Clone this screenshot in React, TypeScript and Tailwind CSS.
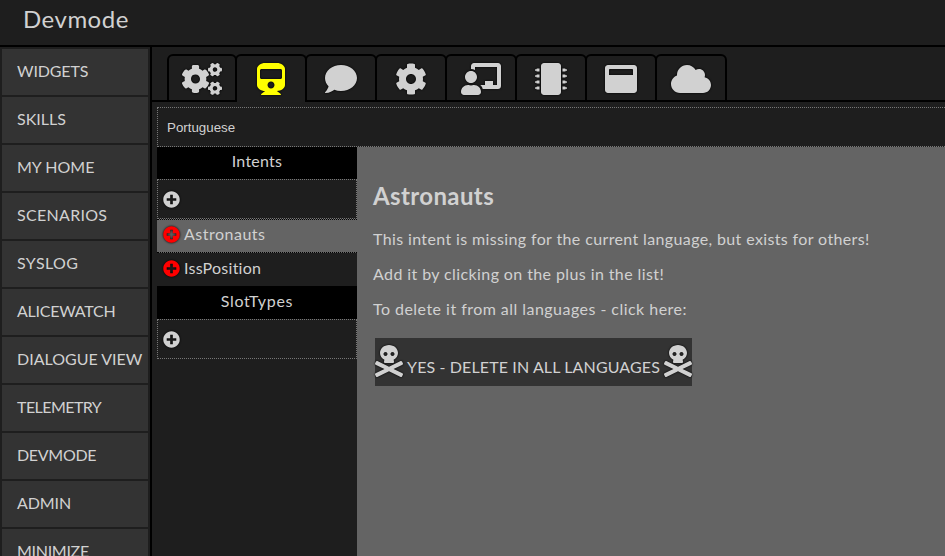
import React from "react";
import {
  FaCogs,
  FaTrain,
  FaComment,
  FaCog,
  FaChalkboardTeacher,
  FaMicrochip,
  FaWindowMaximize,
  FaCloud,
  FaPlusCircle,
  FaSkullCrossbones,
} from "react-icons/fa";

const menu = [
  { label: "WIDGETS", spacing: "tracking-[-0.15px]" },
  { label: "SKILLS", spacing: "tracking-[0px]" },
  { label: "MY HOME", spacing: "tracking-[0px]" },
  { label: "SCENARIOS", spacing: "tracking-[0.3px]" },
  { label: "SYSLOG", spacing: "tracking-[0.4px]" },
  { label: "ALICEWATCH", spacing: "tracking-[-0.25px]" },
  { label: "DIALOGUE VIEW", spacing: "tracking-[0px]" },
  { label: "TELEMETRY", spacing: "tracking-[-0.55px]" },
  { label: "DEVMODE", spacing: "tracking-[-0.3px]" },
  { label: "ADMIN", spacing: "tracking-[-0.1px]" },
  { label: "MINIMIZE", spacing: "tracking-[-0.3px]" },
];

const tabs = [
  { Icon: FaCogs, width: "w-10" },
  { Icon: FaTrain, width: "w-8" },
  { Icon: FaComment, width: "w-8" },
  { Icon: FaCog, width: "w-8" },
  { Icon: FaChalkboardTeacher, width: "w-10" },
  { Icon: FaMicrochip, width: "w-8" },
  { Icon: FaWindowMaximize, width: "w-8" },
  { Icon: FaCloud, width: "w-10" },
];

function AddRow() {
  return (
    <div className="flex h-10 items-center border border-dotted border-[#777] pl-[5px]">
      <FaPlusCircle className="size-[17px] drop-shadow-[0_0_1px_#000]" />
    </div>
  );
}

function Skull() {
  return <FaSkullCrossbones className="h-8 w-7 shrink-0 drop-shadow-[0_0_1px_#000]" />;
}

export default function App() {
  return (
    <div className="flex h-screen flex-col overflow-hidden bg-[#1e1e1e] font-[Lato,sans-serif] text-base text-[#d1d1d1]">
      <header className="h-[47px] shrink-0 border-b-2 border-black pl-[23px]">
        <h1 className="pt-px text-2xl leading-9 tracking-[0.5px]">Devmode</h1>
      </header>
      <div className="flex min-h-0 flex-1">
        <nav className="flex w-[152px] shrink-0 flex-col gap-[2px] overflow-hidden border-r-2 border-black pt-[2px] pr-[2px] pl-[2px]">
          {menu.map((m) => (
            <a key={m.label} className="h-[46px] shrink-0 bg-[#333] pl-[15px] leading-[43px] whitespace-nowrap">
              <span className={m.spacing}>{m.label}</span>
            </a>
          ))}
        </nav>
        <main className="flex min-w-0 flex-1 flex-col">
          <div className="flex h-[55px] shrink-0">
            <div className="w-[15px] border-b-2 border-black" />
            {tabs.map(({ Icon, width }, i) => (
              <div
                key={i}
                className={
                  "mt-[7px] flex shrink-0 items-center justify-center rounded-t-[6px] border-x-2 border-t-2 border-black " +
                  (i === 0 ? "w-[70px] " : "-ml-[2px] w-[72px] ") +
                  (i === 1 ? "pb-[2px] text-[#ffff00]" : "border-b-2")
                }
              >
                <Icon className={"mt-[2px] h-8 shrink-0 drop-shadow-[0_0_1px_#000] " + width} />
              </div>
            ))}
            <div className="flex-1 border-b-2 border-black" />
          </div>
          <div className="flex min-h-0 flex-1 flex-col pt-[5px] pl-[5px]">
            <div className="h-10 shrink-0 border-y border-l border-dotted border-[#777] pl-[9px] font-['Liberation_Sans',sans-serif] text-[13.33px] leading-[39px]">
              Portuguese
            </div>
            <div className="flex min-h-0 flex-1">
              <div className="w-[200px] shrink-0">
                <div className="h-8 bg-black text-center leading-[27px]">
                  <span className="tracking-[0.25px]">Intents</span>
                </div>
                <AddRow />
                <div className="flex h-[34px] items-center border-y border-dotted border-black bg-[#646464] pl-[6px]">
                  <FaPlusCircle className="mb-[3px] size-[17px] text-[#ff0000] drop-shadow-[0_0_1px_#000]" />
                  <span className="mb-[4px] pl-1 tracking-[0.5px]">Astronauts</span>
                </div>
                <div className="flex h-[33px] items-center pl-[6px]">
                  <FaPlusCircle className="mb-[2px] size-[17px] text-[#ff0000] drop-shadow-[0_0_1px_#000]" />
                  <span className="mb-[3px] pl-1 tracking-[0.25px]">IssPosition</span>
                </div>
                <div className="h-[33px] bg-black text-center leading-[29px]">
                  <span className="tracking-[0.7px]">SlotTypes</span>
                </div>
                <AddRow />
              </div>
              <section className="min-w-0 flex-1 bg-[#646464] pt-[31px] pl-4">
                <h2 className="text-2xl leading-9 font-bold tracking-[0.38px]">Astronauts</h2>
                <p className="mt-[7px] leading-[35px] tracking-[0.37px]">
                  This intent is missing for the current language, but exists for others!
                </p>
                <p className="leading-[35px] tracking-[0.4px]">
                  Add it by clicking on the plus in the list!
                </p>
                <p className="leading-[35px] tracking-[0.46px]">
                  To delete it from all languages - click here:
                </p>
                <button className="mt-[12px] ml-[2px] flex h-12 w-[317px] items-start justify-between bg-[#333] pt-[7px]">
                  <Skull />
                  <span className="pt-[10px] leading-6 tracking-[0.12px] whitespace-nowrap">
                    YES - DELETE IN ALL LANGUAGES
                  </span>
                  <Skull />
                </button>
              </section>
            </div>
          </div>
        </main>
      </div>
    </div>
  );
}
